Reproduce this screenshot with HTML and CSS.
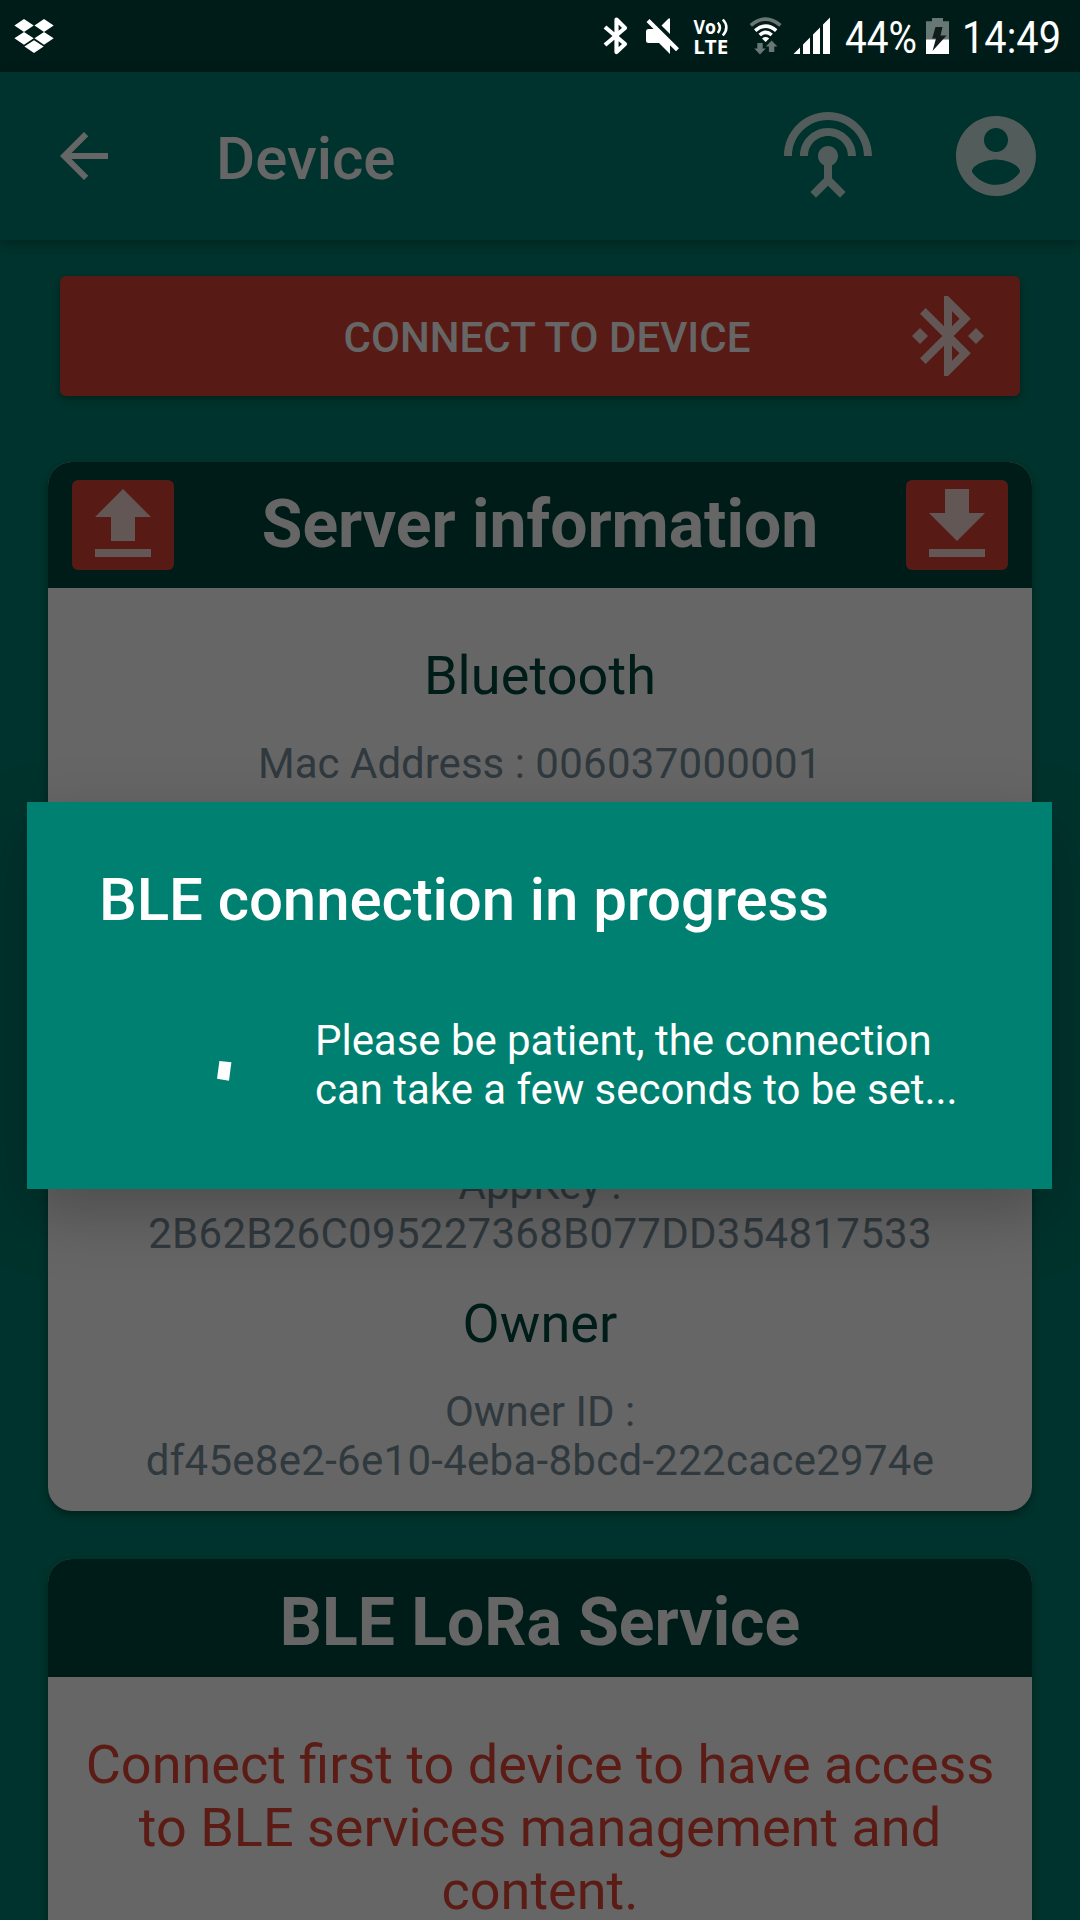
FILE: index.html
```html
<!DOCTYPE html>
<html lang="en">
<head>
<meta charset="utf-8">
<title>Device</title>
<link rel="stylesheet" href="styles.css">
</head>
<body>
<div class="screen">
  <div class="status-space"></div>
  <header class="toolbar">
    <svg class="icon-back" viewBox="0 0 24 24"><path d="M20 11H7.83l5.59-5.59L12 4l-8 8 8 8 1.41-1.41L7.83 13H20v-2z"/></svg>
    <h1 class="toolbar-title">Device</h1>
    <svg class="icon" viewBox="0 0 24 24"><path d="M12 5c-3.87 0-7 3.13-7 7h2c0-2.76 2.24-5 5-5s5 2.24 5 5h2c0-3.87-3.13-7-7-7zm1 9.29c.88-.39 1.5-1.26 1.5-2.29 0-1.38-1.12-2.5-2.5-2.5S9.5 10.62 9.5 12c0 1.02.62 1.9 1.5 2.29v3.3L7.59 21 9 22.41l3-3 3 3L16.41 21 13 17.59v-3.3zM12 1C5.93 1 1 5.93 1 12h2c0-4.97 4.03-9 9-9s9 4.03 9 9h2c0-6.07-4.93-11-11-11z"/></svg>
    <svg class="icon" viewBox="0 0 24 24"><path d="M12 2C6.48 2 2 6.48 2 12s4.48 10 10 10 10-4.48 10-10S17.52 2 12 2zm0 3c1.66 0 3 1.34 3 3s-1.34 3-3 3-3-1.34-3-3 1.34-3 3-3zm0 14.2c-2.5 0-4.71-1.28-6-3.22.03-1.99 4-3.08 6-3.08 1.99 0 5.97 1.09 6 3.08-1.29 1.94-3.5 3.22-6 3.22z"/></svg>
  </header>

  <main class="content">
    <button class="connect">
      <span class="connect-label">CONNECT TO DEVICE</span>
      <svg class="icon" viewBox="0 0 24 24"><path d="M7 12l-2-2-2 2 2 2 2-2zm10.71-4.29L12 2h-1v7.59L6.41 5 5 6.41 10.59 12 5 17.59 6.41 19 11 14.41V22h1l5.71-5.71-4.3-4.29 4.3-4.29zM13 5.83l1.88 1.88L13 9.59V5.83zm1.88 10.46L13 18.17v-3.76l1.88 1.88zM19 10l-2 2 2 2 2-2-2-2z"/></svg>
    </button>

    <section class="card card-server">
      <div class="card-head">
        <button class="square"><svg class="icon" viewBox="0 0 24 24"><path d="M9 16h6v-6h4l-7-7-7 7h4zm-4 2h14v2H5z"/></svg></button>
        <h2 class="card-title">Server information</h2>
        <button class="square"><svg class="icon" viewBox="0 0 24 24"><path d="M19 9h-4V3H9v6H5l7 7 7-7zM5 18v2h14v-2H5z"/></svg></button>
      </div>
      <div class="card-body">
        <div class="group group-bluetooth">
          <h3 class="group-title">Bluetooth</h3>
          <p class="detail">Mac Address : <span class="code">006037000001</span></p>
        </div>
        <p class="detail">AppKey :<br><span class="code">2B62B26C095227368B077DD354817533</span></p>
        <div class="group group-owner">
          <h3 class="group-title">Owner</h3>
          <p class="detail">Owner ID :<br><span class="code">df45e8e2-6e10-4eba-8bcd-222cace2974e</span></p>
        </div>
      </div>
    </section>

    <section class="card card-lora">
      <div class="card-head card-head-plain">
        <h2 class="card-title">BLE LoRa Service</h2>
      </div>
      <div class="card-body">
        <p class="warning">Connect first to device to have access<br>to BLE services management and<br>content.</p>
      </div>
    </section>
  </main>

  <div class="scrim">
    <div class="dialog">
      <h2 class="dialog-title">BLE connection in progress</h2>
      <div class="dialog-row">
        <svg class="spinner" viewBox="0 0 144 144"><path d="M48.400 62 60.400 63.300 58 81.700 46 79.700z"/></svg>
        <p class="dialog-text">Please be patient, the connection<br>can take a few seconds to be set...</p>
      </div>
    </div>
  </div>

  <svg class="status" viewBox="0 0 1080 72">
    <!-- dropbox -->
    <g fill="#fff">
      <path d="M14.4 25.5 24 19l9.7 6.5L24 32zM34.5 25.5 44 19l9.7 6.5L44 32zM14.4 38.3 24 32l9.7 6.3-9.7 6.4zM34.5 38.3 44 32l9.7 6.3-9.7 6.4zM24.4 46.5 34 40.2l9.7 6.3L34 53z"/>
    </g>
    <!-- bluetooth -->
    <path d="M605 27 625 44 616.5 52V19.500L625 28 605 45" fill="none" stroke="#fff" stroke-width="4.200" stroke-linejoin="round"/>
    <!-- muted speaker -->
    <path d="M646 31.500q0-2.500 2.500-2.500h5.500L670 45v9L659 43h-10.500q-2.500 0-2.500-2.500zM661.500 25.500 668 19q2-1.500 2 .5V34zM649.500 19 679 48.200l-3 3L646.500 22z" fill="#fff"/>
    <!-- volte -->
    <g fill="#fff" font-family="Open Sans, sans-serif" font-weight="700">
      <text x="693.500" y="33.700" font-size="19" textLength="22.500" lengthAdjust="spacingAndGlyphs">Vo</text>
      <text x="693.200" y="54" font-size="20.300" textLength="35" lengthAdjust="spacingAndGlyphs">LTE</text>
    </g>
    <path d="M717.800 22.500q4.200 4.800 0 10.500M722.800 19.500q7.200 7.700 0 16" fill="none" stroke="#fff" stroke-width="2.500"/>
    <!-- wifi -->
    <g fill="none" stroke="#fff" stroke-width="3.600">
      <path d="M750.800 25.300q15-12.500 29.600 0" stroke="#667774"/>
      <path d="M755.200 30.600q10.500-9 21 0M759.700 35q6-5.200 12 0"/>
    </g>
    <path d="M762 38.500q3.600-2.800 7.200 0L765.600 42z" fill="#fff"/>
    <path d="M757.300 43h5.400v5.500h3.100L760 54.500 754.200 48.500h3.100zM768.900 52v-5.500h-3.100L771.600 40.500 777.400 46.500h-3.100V52z" fill="#667774"/>
    <!-- signal -->
    <path d="M793.500 54 800 47.500V54zM803 44.500 810 37.500V54h-7zM813 34.500 820 27.500V54h-7zM823 24.500 830 17.500V54h-7z" fill="#fff"/>
    <!-- battery -->
    <path d="M932 18h11v3.300h6V40h-23V21.300h6z" fill="#667774"/>
    <path d="M926 39.500h23V54h-23z" fill="#fff"/>
    <path d="M935.500 27h7l-2 8.500h6L932.500 51l3.500-12.500h-3.800z" fill="#101c19"/>
    <g fill="#fff" font-family="Roboto, sans-serif" font-size="44">
      <text x="845" y="52.700" textLength="72" lengthAdjust="spacingAndGlyphs">44%</text>
      <text x="962" y="52.700" textLength="99" lengthAdjust="spacingAndGlyphs">14:49</text>
    </g>
  </svg>
</div>
</body>
</html>
```
FILE: styles.css
```css
* { box-sizing: border-box; margin: 0; padding: 0; }

body {
  width: 1080px;
  height: 1920px;
  overflow: hidden;
  font-family: Roboto, sans-serif;
}

.screen {
  position: relative;
  width: 1080px;
  height: 1920px;
  overflow: hidden;
  display: flex;
  flex-direction: column;
  background: #008070;
}

.status-space { height: 72px; flex: none; background: #00463c; }

.toolbar {
  height: 168px;
  flex: none;
  display: flex;
  align-items: center;
  padding: 0 36px 0 48px;
  background: #008070;
  box-shadow: 0 4px 12px rgba(0, 0, 0, .3);
}
.icon-back { width: 72px; height: 72px; fill: #fff; flex: none; }
.toolbar-title {
  margin-left: 96px;
  margin-right: auto;
  padding-top: 6px;
  font-size: 60px;
  line-height: 70px;
  font-weight: 500;
  color: #fff;
}
.icon { width: 96px; height: 96px; flex: none; fill: #fff; opacity: .8; }
.toolbar .icon + .icon { margin-left: 72px; }

.content {
  display: flex;
  flex-direction: column;
  flex: none;
  padding: 36px 48px 0;
}

button { border: 0; font: inherit; color: inherit; border-radius: 6px; background: #d94132; }

.connect {
  display: flex;
  align-items: center;
  height: 120px;
  margin: 0 12px;
  padding: 0 24px 0 134px;
  box-shadow: 0 3px 8px rgba(0, 0, 0, .35);
}
.connect-label {
  flex: 1;
  text-align: center;
  font-size: 42px;
  line-height: 49px;
  font-weight: 500;
  letter-spacing: .05px;
  color: #fff;
  padding-top: 2px;
}

.card {
  border-radius: 24px;
  overflow: hidden;
  background: #fff;
  text-align: center;
  box-shadow: 0 4px 8px rgba(0, 0, 0, .35);
}
.card-server { margin-top: 66px; height: 1049px; }
.card-lora { margin-top: 48px; height: 420px; }
.card-head {
  display: flex;
  align-items: center;
  justify-content: space-between;
  height: 126px;
  padding: 0 24px;
  background: #00463c;
}
.card-head-plain {
  height: 118px;
  align-items: flex-start;
  justify-content: center;
  padding-top: 25px;
}
.card-title { font-size: 66px; line-height: 78px; font-weight: 700; color: #fff; }
.square { display: flex; align-items: center; justify-content: center; width: 102px; height: 90px; }

.card-body { padding: 56px 24px 0; }
.group-title {
  font-size: 54px;
  line-height: 63px;
  font-weight: 400;
  letter-spacing: .1px;
  color: #00463c;
}
.detail { font-size: 42px; line-height: 49px; color: #78909c; }
.code { letter-spacing: .28px; }
.group .detail { margin-top: 32px; }
.group-bluetooth { height: 516px; }
.group-owner { margin-top: 34px; }
.group-owner .detail { margin-top: 32px; }
.warning { font-size: 54px; line-height: 63px; color: #e74639; }

.scrim {
  position: absolute;
  inset: 0;
  padding: 802px 28px 0 27px;
  background: rgba(0, 0, 0, .6);
}
.dialog {
  height: 387px;
  padding: 63px 72px 0;
  background: #008070;
  color: #fff;
  box-shadow: 0 24px 60px rgba(0, 0, 0, .25);
}
.dialog-title { font-size: 60px; line-height: 70px; font-weight: 500; letter-spacing: -.1px; }
.dialog-row { display: flex; align-items: flex-start; margin-top: 64px; padding-left: 72px; }
.spinner { width: 144px; height: 144px; flex: none; fill: #fff; }
.dialog-text {
  padding-top: 17px;
  font-size: 42px;
  line-height: 49px;
  letter-spacing: -.04px;
  white-space: nowrap;
}

.status { position: absolute; top: 0; left: 0; width: 1080px; height: 72px; }
```
